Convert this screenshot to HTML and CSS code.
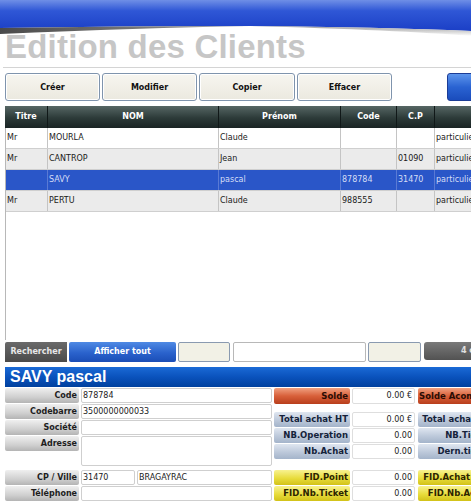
FILE: index.html
```html
<!DOCTYPE html>
<html lang="fr">
<head>
<meta charset="utf-8">
<title>Edition des Clients</title>
<link rel="stylesheet" href="styles.css">
</head>
<body>
<div class="page">
  <div class="banner">
    <svg width="471" height="36" viewBox="0 0 471 36">
      <defs>
        <linearGradient id="bl" x1="0" y1="0" x2="0" y2="1">
          <stop offset="0" stop-color="#6f8fe6"/>
          <stop offset="0.35" stop-color="#2f57d6"/>
          <stop offset="1" stop-color="#1b3fc6"/>
        </linearGradient>
        <linearGradient id="sh" x1="0" y1="0" x2="1" y2="0">
          <stop offset="0" stop-color="#4a4a4a"/>
          <stop offset="1" stop-color="#9a9a9a"/>
        </linearGradient>
        <linearGradient id="sh2" x1="0" y1="0" x2="0" y2="1">
          <stop offset="0" stop-color="#a0a0a0"/>
          <stop offset="1" stop-color="#ffffff"/>
        </linearGradient>
      </defs>
      <path d="M0 0 H471 V31 Q380 27 250 26 Q120 26 0 28 Z" fill="url(#bl)"/>
      <path d="M0 28 Q120 26 250 26 Q140 28 0 34 Z" fill="url(#sh)"/>
      <path d="M250 26 Q380 27 471 31 V36 Q400 30 250 26 Z" fill="url(#sh2)"/>
    </svg>
  </div>

  <h1 class="title">Edition des Clients</h1>

  <div class="toolbar">
    <button class="btn">Créer</button>
    <button class="btn">Modifier</button>
    <button class="btn btn-wide">Copier</button>
    <button class="btn">Effacer</button>
    <button class="btn btn-blue"></button>
  </div>

  <div class="grid">
    <div class="grow ghead">
      <div class="c">Titre</div><div class="c">NOM</div><div class="c">Prénom</div><div class="c">Code</div><div class="c">C.P</div><div class="c"></div>
    </div>
    <div class="grow">
      <div class="c">Mr</div><div class="c">MOURLA</div><div class="c">Claude</div><div class="c"></div><div class="c"></div><div class="c">particulier</div>
    </div>
    <div class="grow alt">
      <div class="c">Mr</div><div class="c">CANTROP</div><div class="c">Jean</div><div class="c"></div><div class="c">01090</div><div class="c">particulier</div>
    </div>
    <div class="grow sel">
      <div class="c"></div><div class="c">SAVY</div><div class="c">pascal</div><div class="c">878784</div><div class="c">31470</div><div class="c">particulier</div>
    </div>
    <div class="grow alt">
      <div class="c">Mr</div><div class="c">PERTU</div><div class="c">Claude</div><div class="c">988555</div><div class="c"></div><div class="c">particulier</div>
    </div>
  </div>

  <div class="search">
    <div class="s-label">Rechercher</div>
    <div class="s-blue">Afficher tout</div>
    <div class="s-box beige w52"></div>
    <div class="s-box white w133"></div>
    <div class="s-box beige w53"></div>
    <div class="s-count">4 clients</div>
  </div>

  <div class="detail-head">SAVY pascal</div>

  <div class="form">
    <div class="left">
      <div class="lab">Code</div><div class="val">878784</div>
      <div class="lab">Codebarre</div><div class="val">3500000000033</div>
      <div class="lab">Société</div><div class="val"></div>
      <div class="lab">Adresse</div><div class="val tall"></div>
      <div class="lab mt">CP / Ville</div>
      <div class="split mt"><div class="val cp">31470</div><div class="val ville">BRAGAYRAC</div></div>
      <div class="lab">Téléphone</div><div class="val"></div>
    </div>
    <div class="right">
      <div class="rrow solde">
        <div class="rl red">Solde</div><div class="rv">0.00 €</div>
        <div class="rl red">Solde Acompte</div><div class="rv">0.00 €</div>
      </div>
      <div class="rgroup g2">
        <div class="rrow"><div class="rl bluegray">Total achat HT</div><div class="rv">0.00 €</div><div class="rl bluegray">Total achat HT</div><div class="rv">0.00 €</div></div>
        <div class="rrow"><div class="rl bluegray">NB.Operation</div><div class="rv">0.00</div><div class="rl bluegray">NB.Ticket</div><div class="rv">0.00</div></div>
        <div class="rrow"><div class="rl bluegray">Nb.Achat</div><div class="rv">0.00</div><div class="rl bluegray">Dern.ticket</div><div class="rv"></div></div>
      </div>
      <div class="rgroup g3">
        <div class="rrow"><div class="rl yellow">FID.Point</div><div class="rv">0.00</div><div class="rl yellow">FID.Achat TTC</div><div class="rv">0.00</div></div>
        <div class="rrow"><div class="rl yellow">FID.Nb.Ticket</div><div class="rv">0.00</div><div class="rl yellow">FID.Nb.Achat</div><div class="rv">0.00</div></div>
      </div>
    </div>
  </div>
</div>
</body>
</html>
```

FILE: styles.css
```css
html, body {
  margin: 0;
  padding: 0;
  background: #ffffff;
}
body {
  width: 471px;
  height: 504px;
  overflow: hidden;
  font-family: "DejaVu Sans", Verdana, sans-serif;
  font-size: 8px;
  color: #1a1a1a;
}
.page {
  width: 600px;
}
.banner {
  height: 34px;
  overflow: visible;
}
.banner svg {
  display: block;
}
.title {
  margin: 0 0 0 3px;
  padding: 0 0 7px 2px;
  height: 26px;
  line-height: 26px;
  font-family: "Liberation Sans", Arial, sans-serif;
  font-weight: bold;
  font-size: 33px;
  letter-spacing: 0.2px;
  color: #c6c6c6;
  border-bottom: 1px solid #d4d4d4;
  width: 468px;
}

/* toolbar */
.toolbar {
  display: flex;
  gap: 2px;
  margin-top: 5px;
  padding-left: 5px;
  height: 28px;
}
.btn {
  width: 95px;
  height: 28px;
  margin: 0;
  padding: 0;
  border: 1px solid #7f94ad;
  border-radius: 3px;
  background: linear-gradient(#f7f6f0, #ebe9df);
  font-family: "DejaVu Sans", Verdana, sans-serif;
  font-size: 8px;
  font-weight: bold;
  color: #111;
  box-shadow: inset 0 0 0 1px #ffffff;
}
.btn-wide {
  width: 96px;
}
.btn-blue {
  margin-left: 53px;
  width: 70px;
  border-color: #1c3c96;
  background: linear-gradient(#5d95ec, #2a63d2 50%, #1a4cbc);
  box-shadow: none;
}

/* grid */
.grid {
  margin-top: 5px;
  margin-left: 5px;
  height: 234px;
  border-left: 1px solid #b8b8b8;
  box-sizing: border-box;
}
.grow {
  display: grid;
  grid-template-columns: 42px 171px 122px 56px 38px 100px;
  height: 21px;
  border-bottom: 1px solid #cfcfcf;
  box-sizing: border-box;
  background: #ffffff;
}
.grow .c {
  border-right: 1px solid #c4c4c4;
  padding-left: 1px;
  line-height: 20px;
  white-space: nowrap;
  overflow: hidden;
}
.grow.alt {
  background: #ebebeb;
}
.grow.sel {
  background: #2a56c8;
  color: #d6def6;
}
.grow.sel .c {
  border-right-color: #5a7ad4;
}
.ghead {
  height: 22px;
  margin-left: -1px;
  border-bottom: none;
  background: linear-gradient(#566664, #2c3a38 55%, #1a2424);
  color: #ffffff;
  font-weight: bold;
  grid-template-columns: 43px 171px 122px 56px 38px 100px;
}
.ghead .c {
  text-align: center;
  line-height: 22px;
  border-right: 1px solid #101818;
  padding-left: 0;
}

/* search bar */
.search {
  display: flex;
  margin-top: 2px;
  margin-left: 5px;
  height: 20px;
}
.s-label {
  width: 62px;
  background: linear-gradient(#6a6a6a, #4a4a4a);
  color: #e8e8e8;
  font-weight: bold;
  text-align: center;
  line-height: 20px;
  border-radius: 2px 0 0 0;
}
.s-blue {
  margin-left: 2px;
  width: 107px;
  background: linear-gradient(#4f8ae4, #2a62cc 55%, #1a4db6);
  color: #ffffff;
  font-weight: bold;
  text-align: center;
  line-height: 20px;
  border-radius: 2px;
}
.s-box {
  box-sizing: border-box;
  height: 20px;
  border: 1px solid #8a9ab0;
  border-radius: 2px;
}
.s-box.beige {
  background: #f2f1e6;
}
.s-box.white {
  background: #ffffff;
  border-color: #b8b8b8;
}
.w52 { width: 52px; margin-left: 2px; }
.w133 { width: 133px; margin-left: 3px; }
.w53 { width: 53px; margin-left: 2px; }
.s-count {
  margin-left: 3px;
  width: 90px;
  height: 18px;
  background: linear-gradient(#7a7a7a, #525252);
  color: #e0e0e0;
  font-weight: bold;
  line-height: 18px;
  padding-left: 37px;
  box-sizing: border-box;
  border-radius: 3px 0 0 3px;
}

/* detail header */
.detail-head {
  margin-top: 5px;
  margin-left: 5px;
  height: 20px;
  background: linear-gradient(#1a6ad6, #0a52bc 50%, #00409e);
  color: #ffffff;
  font-family: "Liberation Sans", Arial, sans-serif;
  font-weight: bold;
  font-size: 16px;
  line-height: 20px;
  padding-left: 5px;
}

/* form */
.form {
  display: flex;
  margin-top: 1px;
  margin-left: 5px;
  gap: 2px;
}
.left {
  display: grid;
  grid-template-columns: 74px 191px;
  column-gap: 2px;
  row-gap: 1px;
  align-items: start;
}
.lab {
  height: 15px;
  line-height: 15px;
  background: linear-gradient(#efefef, #d0d0d0 60%, #b4b4b4);
  border-radius: 2px;
  font-weight: bold;
  text-align: right;
  padding-right: 2px;
  box-sizing: border-box;
  color: #1e1e1e;
}
.val {
  height: 15px;
  line-height: 13px;
  border: 1px solid #cfcfcf;
  border-radius: 2px;
  background: #ffffff;
  padding-left: 1px;
  box-sizing: border-box;
  color: #222;
}
.val.tall {
  height: 30px;
}
.mt {
  margin-top: 2px;
}
.split {
  display: flex;
  gap: 2px;
}
.val.cp { width: 54px; }
.val.ville { flex: 1; }

.right {
  display: flex;
  flex-direction: column;
}
.rrow {
  display: grid;
  grid-template-columns: 76px 63px 76px 63px;
  column-gap: 2px;
  height: 15px;
}
.rrow .rl:nth-child(3) {
  margin-left: 1px;
}
.rrow.solde {
  height: 16px;
}
.rgroup {
  display: flex;
  flex-direction: column;
  gap: 1px;
}
.g2 { margin-top: 8px; }
.g3 { margin-top: 11px; }
.rl {
  font-weight: bold;
  font-size: 8.5px;
  text-align: right;
  padding-right: 2px;
  line-height: 15px;
  border-radius: 2px;
  white-space: nowrap;
  overflow: hidden;
}
.rrow.solde .rl { line-height: 16px; }
.rl.red {
  background: linear-gradient(#f0a080, #d8603a 50%, #b83e1c);
  color: #2a0c04;
}
.rl.bluegray {
  background: linear-gradient(#dfe6f0, #bcc8da 55%, #a4b4ca);
  color: #14223a;
}
.rl.yellow {
  background: linear-gradient(#f8f290, #e8dc3c 55%, #d2c218);
  color: #2c2400;
}
.rv {
  background: #ffffff;
  border: 1px solid #dedede;
  border-radius: 2px;
  text-align: right;
  padding-right: 2px;
  line-height: 13px;
  box-sizing: border-box;
  color: #222;
}
.rrow.solde .rv { line-height: 14px; }
```
